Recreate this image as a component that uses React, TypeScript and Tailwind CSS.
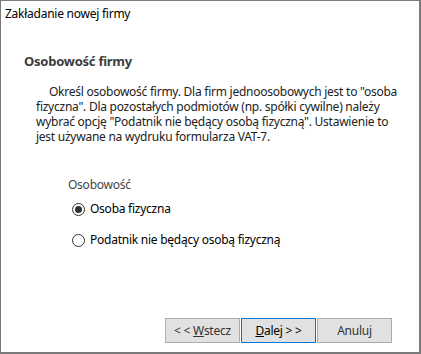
const Radio = ({ checked, label }: { checked?: boolean; label: string }) => (
  <label className="flex items-center gap-[5px] h-[16px]">
    <span className="w-[13px] h-[13px] rounded-full border border-[#333333] bg-white flex items-center justify-center">
      {checked && <span className="w-[7px] h-[7px] rounded-full bg-[#333333]" />}
    </span>
    <span className="text-[#000000]">{label}</span>
  </label>
);

const App = () => {
  return (
    <div
      className="w-[421px] h-[354px] bg-white border-l border-t border-r-2 border-b-2 border-[#7a7a7a] flex flex-col text-[12px] leading-[16px] tracking-[-0.25px] text-black"
      style={{ fontFamily: '"Noto Sans", "Liberation Sans", sans-serif' }}
    >
      {/* Title */}
      <div className="pl-[4px] pt-[5px]">Zakładanie nowej firmy</div>

      {/* Header */}
      <h1 className="ml-[23px] mt-[31px] text-[13px] font-bold text-[#3c3c3c]">Osobowość firmy</h1>

      {/* Description */}
      <p className="ml-[35px] mt-[15px] whitespace-nowrap text-[#222222] leading-[15px] indent-[13px]">
        Określ osobowość firmy. Dla firm jednoosobowych jest to "osoba
        <br />
        fizyczna". Dla pozostałych podmiotów (np. spółki cywilne) należy
        <br />
        wybrać opcję "Podatnik nie będący osobą fizyczną". Ustawienie to
        <br />
        jest używane na wydruku formularza VAT-7.
      </p>

      {/* Option group */}
      <div className="ml-[67px] mt-[33px] text-[#444444]">Osobowość</div>
      <div className="ml-[71px] mt-[8px] flex flex-col gap-[15px]">
        <Radio checked label="Osoba fizyczna" />
        <Radio label="Podatnik nie będący osobą fizyczną" />
      </div>

      {/* Buttons */}
      <div className="mt-auto mb-[9px] mr-[27px] flex justify-end gap-[1px]">
        <button className="w-[75px] h-[25px] bg-[#e1e1e1] border border-[#adadad] text-[#333333]">
          &lt; &lt; <span className="underline">W</span>stecz
        </button>
        <button className="w-[75px] h-[25px] bg-[#e1e1e1] border border-[#0078d7] text-black">
          <span className="underline">D</span>alej &gt; &gt;
        </button>
        <button className="w-[75px] h-[25px] bg-[#e1e1e1] border border-[#adadad] text-[#333333]">
          Anuluj
        </button>
      </div>
    </div>
  );
};

export default App;
